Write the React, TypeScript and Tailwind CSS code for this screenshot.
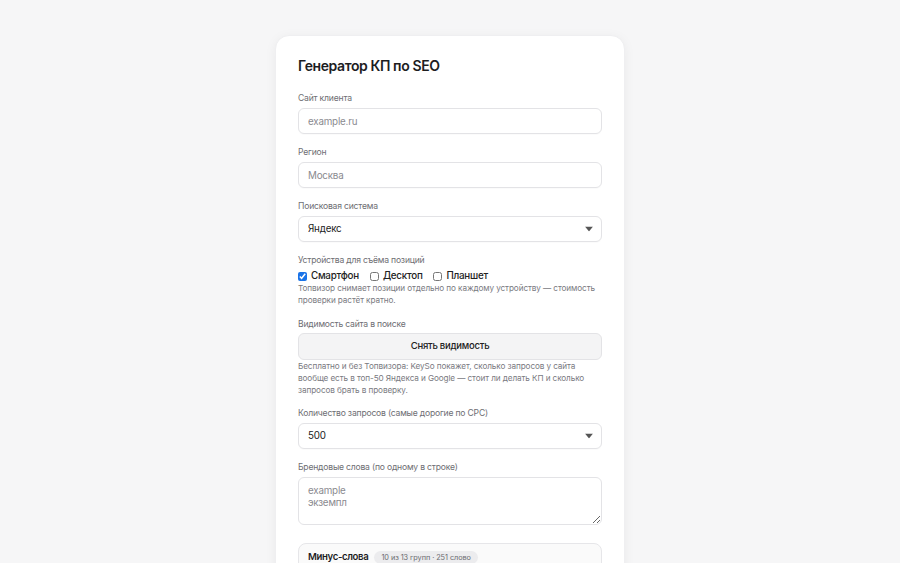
import React from "react";

const Arrow = () => (
  <svg className="pointer-events-none absolute right-[9px] top-1/2 -translate-y-1/2" width="8" height="5" viewBox="0 0 8 5">
    <path d="M0 0 L8 0 L4 5 Z" fill="#555" />
  </svg>
);

const Label = ({ children }: { children: React.ReactNode }) => (
  <div className="text-[8.6px] tracking-[-0.2px] leading-[12px] text-[#6e6e73] mb-[4px]">{children}</div>
);

const inputCls =
  "block w-full h-[26px] rounded-[6px] border border-[#e3e3e6] bg-white px-[9px] text-[9.8px] tracking-[-0.2px] text-[#222] placeholder:text-[#8a8a8f] outline-none shadow-[0_1px_1px_rgba(0,0,0,0.02)]";

const helpCls = "text-[8.2px] tracking-[-0.1px] leading-[12px] text-[#7a7a7f]";

export default function App() {
  return (
    <div
      className="min-h-[563px] w-full bg-[#f6f6f7] flex justify-center pt-[35px]"
      style={{ fontFamily: "Inter, 'Noto Sans', sans-serif" }}
    >
      <div className="w-[350px] bg-white rounded-t-[14px] border border-[#efeff1] shadow-[0_2px_12px_rgba(0,0,0,0.05)] px-[22px] pt-[20px] pb-[20px] flex flex-col">
        <h1 className="text-[14px] tracking-[-0.4px] font-semibold text-[#1d1d1f] leading-[20px] mb-[16px]">Генератор КП по SEO</h1>

        <div className="mb-[12px]">
          <Label>Сайт клиента</Label>
          <input className={inputCls} placeholder="example.ru" />
        </div>

        <div className="mb-[12px]">
          <Label>Регион</Label>
          <input className={inputCls} placeholder="Москва" />
        </div>

        <div className="mb-[12px]">
          <Label>Поисковая система</Label>
          <div className="relative">
            <select className={inputCls + " appearance-none"} defaultValue="Яндекс">
              <option>Яндекс</option>
              <option>Google</option>
            </select>
            <Arrow />
          </div>
        </div>

        <div className="mb-[12px]">
          <Label>Устройства для съёма позиций</Label>
          <div className="mt-[1px] flex items-center gap-[11px] h-[12px] text-[9.8px] tracking-[-0.25px] font-medium text-[#222]">
            <label className="flex items-center gap-[4px]">
              <input type="checkbox" defaultChecked className="m-0 w-[9px] h-[9px] accent-[#1a73e8]" />
              Смартфон
            </label>
            <label className="flex items-center gap-[4px]">
              <input type="checkbox" className="m-0 w-[9px] h-[9px]" />
              Десктоп
            </label>
            <label className="flex items-center gap-[4px]">
              <input type="checkbox" className="m-0 w-[9px] h-[9px]" />
              Планшет
            </label>
          </div>
          <div className={helpCls}>
            Топвизор снимает позиции отдельно по каждому устройству — стоимость проверки растёт кратно.
          </div>
        </div>

        <div className="mb-[11px]">
          <div className="text-[8.6px] tracking-[-0.2px] leading-[12px] text-[#6e6e73] mb-[3px]">Видимость сайта в поиске</div>
          <button className="block w-full h-[27px] rounded-[6px] border border-[#e3e3e6] bg-[#f4f4f5] text-[9.5px] tracking-[-0.25px] font-medium text-[#222]">
            Снять видимость
          </button>
          <div className={helpCls}>
            Бесплатно и без Топвизора: KeySo покажет, сколько запросов у сайта вообще есть в топ-50 Яндекса и Google — стоит ли делать КП и сколько запросов брать в проверку.
          </div>
        </div>

        <div className="mb-[12px]">
          <Label>Количество запросов (самые дорогие по CPC)</Label>
          <div className="relative">
            <select className={inputCls + " appearance-none"} defaultValue="500">
              <option>100</option>
              <option>300</option>
              <option>500</option>
              <option>1000</option>
            </select>
            <Arrow />
          </div>
        </div>

        <div className="mb-[18px]">
          <Label>Брендовые слова (по одному в строке)</Label>
          <textarea
            className="block w-full h-[48px] rounded-[6px] border border-[#e3e3e6] bg-white px-[9px] pt-[7px] text-[9.8px] tracking-[-0.2px] leading-[11.5px] text-[#222] placeholder:text-[#8a8a8f] outline-none"
            placeholder={"example\nэкземпл"}
          />
        </div>

        <div className="rounded-[8px] border border-[#e6e6e9] bg-[#fafafa] px-[9px] pt-[6px] pb-[30px]">
          <div className="flex items-center gap-[6px]">
            <span className="text-[9.6px] tracking-[-0.35px] font-semibold text-[#1d1d1f] leading-[14px]">Минус-слова</span>
            <span className="rounded-full bg-[#ececee] px-[7px] py-[1px] text-[7.3px] tracking-[-0.05px] text-[#6b6b70] leading-[11px]">10 из 13 групп · 251 слово</span>
          </div>
        </div>
      </div>
    </div>
  );
}
